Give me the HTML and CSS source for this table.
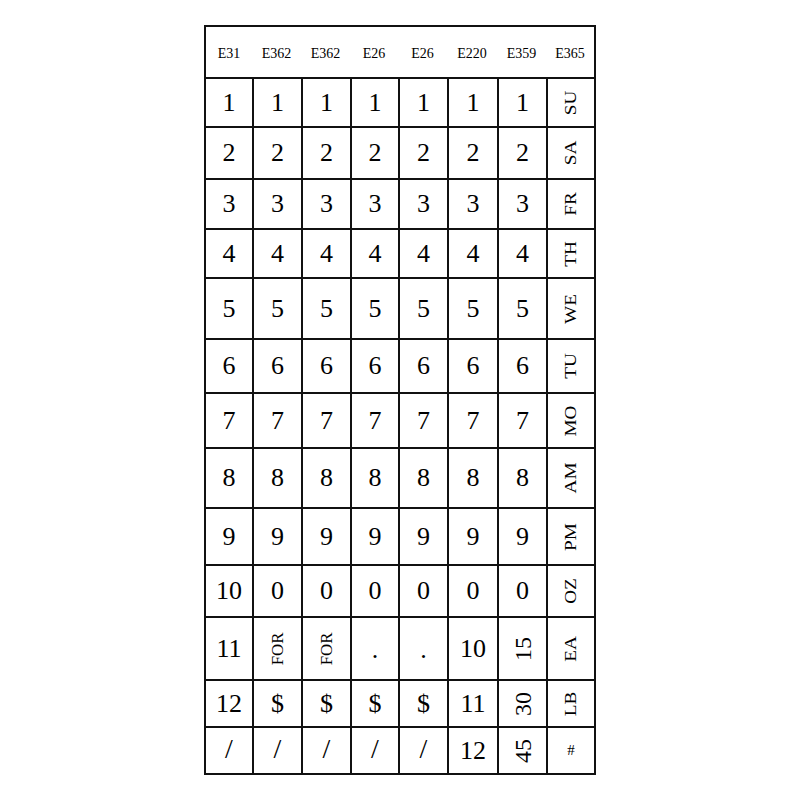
FILE: index.html
```html
<!DOCTYPE html>
<html>
<head>
<meta charset="utf-8">
<link rel="stylesheet" href="styles.css">
</head>
<body>
<div class="page">
  <div class="grid">
    <div class="head">
      <span>E31</span><span>E362</span><span>E362</span><span>E26</span><span>E26</span><span>E220</span><span>E359</span><span>E365</span>
    </div>

    <div class="c r1">1</div><div class="c r1">1</div><div class="c r1">1</div><div class="c r1">1</div><div class="c r1">1</div><div class="c r1">1</div><div class="c r1">1</div><div class="c r1"><span class="v">SU</span></div>
    <div class="c r2">2</div><div class="c r2">2</div><div class="c r2">2</div><div class="c r2">2</div><div class="c r2">2</div><div class="c r2">2</div><div class="c r2">2</div><div class="c r2"><span class="v">SA</span></div>
    <div class="c r3">3</div><div class="c r3">3</div><div class="c r3">3</div><div class="c r3">3</div><div class="c r3">3</div><div class="c r3">3</div><div class="c r3">3</div><div class="c r3"><span class="v">FR</span></div>
    <div class="c r4">4</div><div class="c r4">4</div><div class="c r4">4</div><div class="c r4">4</div><div class="c r4">4</div><div class="c r4">4</div><div class="c r4">4</div><div class="c r4"><span class="v">TH</span></div>
    <div class="c r5">5</div><div class="c r5">5</div><div class="c r5">5</div><div class="c r5">5</div><div class="c r5">5</div><div class="c r5">5</div><div class="c r5">5</div><div class="c r5"><span class="v">WE</span></div>
    <div class="c r6">6</div><div class="c r6">6</div><div class="c r6">6</div><div class="c r6">6</div><div class="c r6">6</div><div class="c r6">6</div><div class="c r6">6</div><div class="c r6"><span class="v">TU</span></div>
    <div class="c r7">7</div><div class="c r7">7</div><div class="c r7">7</div><div class="c r7">7</div><div class="c r7">7</div><div class="c r7">7</div><div class="c r7">7</div><div class="c r7"><span class="v">MO</span></div>
    <div class="c r8">8</div><div class="c r8">8</div><div class="c r8">8</div><div class="c r8">8</div><div class="c r8">8</div><div class="c r8">8</div><div class="c r8">8</div><div class="c r8"><span class="v">AM</span></div>
    <div class="c r9">9</div><div class="c r9">9</div><div class="c r9">9</div><div class="c r9">9</div><div class="c r9">9</div><div class="c r9">9</div><div class="c r9">9</div><div class="c r9"><span class="v">PM</span></div>
    <div class="c r10">10</div><div class="c r10">0</div><div class="c r10">0</div><div class="c r10">0</div><div class="c r10">0</div><div class="c r10">0</div><div class="c r10">0</div><div class="c r10"><span class="v">OZ</span></div>
    <div class="c r11">11</div><div class="c r11"><span class="v for">FOR</span></div><div class="c r11"><span class="v for">FOR</span></div><div class="c r11 dot">.</div><div class="c r11 dot">.</div><div class="c r11">10</div><div class="c r11"><span class="vn">15</span></div><div class="c r11"><span class="v">EA</span></div>
    <div class="c r12">12</div><div class="c r12">$</div><div class="c r12">$</div><div class="c r12">$</div><div class="c r12">$</div><div class="c r12">11</div><div class="c r12"><span class="vn">30</span></div><div class="c r12"><span class="v">LB</span></div>
    <div class="c r13 sl">/</div><div class="c r13 sl">/</div><div class="c r13 sl">/</div><div class="c r13 sl">/</div><div class="c r13 sl">/</div><div class="c r13">12</div><div class="c r13"><span class="vn">45</span></div><div class="c r13 hash">#</div>
  </div>
</div>
</body>
</html>
```

FILE: styles.css
```css
html, body {
  margin: 0;
  padding: 0;
  background: #fff;
}

.page {
  padding: 25px 0 0 204px;
  font-family: "Liberation Serif", "Times New Roman", serif;
  color: #000;
}

.grid {
  display: grid;
  width: 392px;
  box-sizing: border-box;
  background: #111;
  padding: 2px;
  gap: 2px;
  grid-template-columns: 46px 47px 47px 46px 47px 48px 47px 46px;
  grid-template-rows: 50px 47px 50px 48px 47px 59px 52px 53px 58px 55px 50px 61px 45px 45px;
}

.head {
  grid-column: 1 / -1;
  background: #fff;
  display: grid;
  grid-template-columns: 46px 49px 49px 48px 49px 50px 49px 48px;
  align-items: center;
  font-size: 14px;
  padding-top: 3px;
}

.head span {
  text-align: center;
}

.c {
  background: #fff;
  display: flex;
  align-items: center;
  justify-content: center;
  font-size: 26px;
  line-height: 1;
}

.dot {
  padding-top: 2px;
}

.v {
  display: inline-block;
  font-size: 16px;
  white-space: nowrap;
  transform: rotate(-90deg) scaleX(1.2);
}

.v.for {
  font-size: 16px;
  transform: rotate(-90deg) scaleX(1.05);
}

.vn {
  display: inline-block;
  font-size: 24px;
  white-space: nowrap;
  transform: rotate(-90deg);
}

.sl {
  font-size: 28px;
  padding-bottom: 3px;
}

.hash {
  font-size: 15px;
}
```
